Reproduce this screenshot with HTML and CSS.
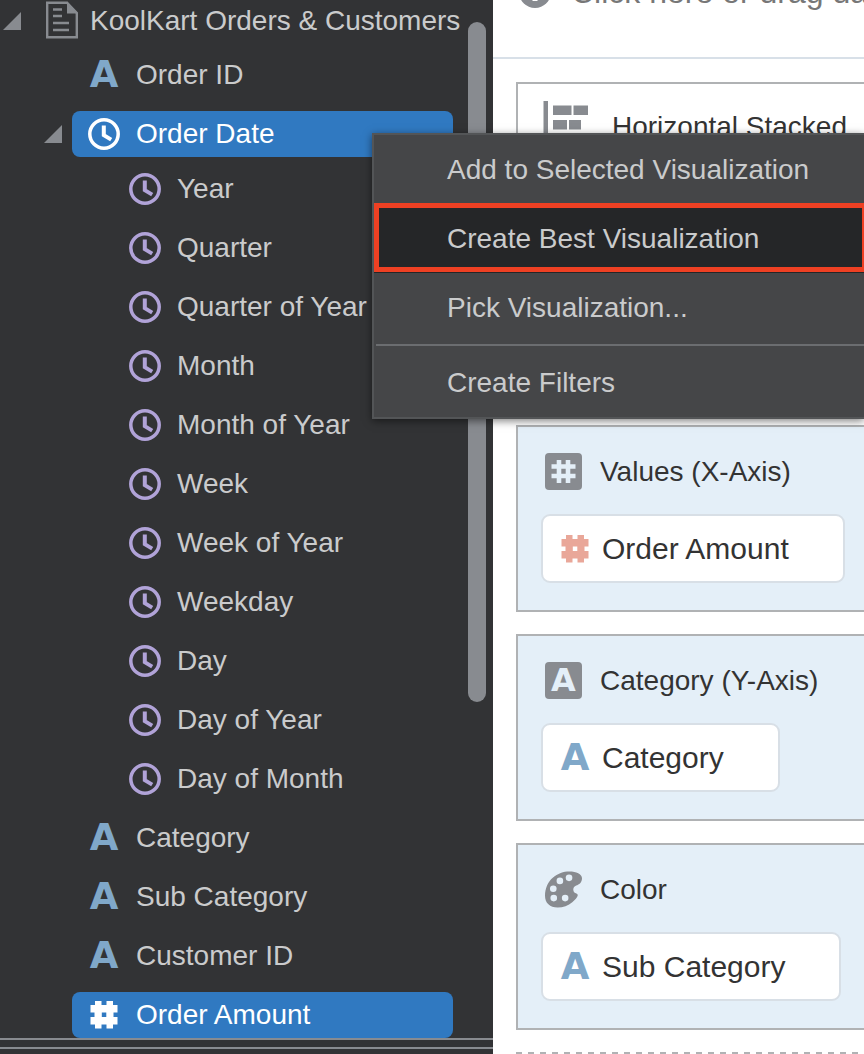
FILE: index.html
```html
<!DOCTYPE html>
<html lang="en">
<head>
<meta charset="utf-8">
<meta name="viewport" content="width=device-width, initial-scale=1">
<title>KoolKart Orders &amp; Customers</title>
<link rel="stylesheet" href="styles.css">
</head>
<body>
<svg class="sprite" aria-hidden="true">
  <symbol id="clock" viewBox="0 0 32 32">
    <circle cx="16" cy="16" r="14.2" fill="none" stroke="currentColor" stroke-width="3.5"/>
    <path d="M15.8 7.6V17.2L23.2 21.6" fill="none" stroke="currentColor" stroke-width="4"/>
  </symbol>
  <symbol id="hash" viewBox="0 0 32 32">
    <path d="M7 2h6.500v4H18.500V2H25v4h4.500v7.500H25.500v4.500h4v7.500H25v4H18.500v-4H13.500v4H7v-4H2.500V18H6.500v-4.500H2.500V6H7zM13.800 13.500v4.500h4.500v-4.500z" fill="currentColor" fill-rule="evenodd"/>
  </symbol>
  <symbol id="toggle" viewBox="0 0 18 18"><path d="M18 0V18H0z" fill="currentColor"/></symbol>
</svg>
<div class="app">
  <aside class="sidebar">
    <div class="scroll-area">
      <ul class="tree">
        <li class="node root">
          <button class="toggle" type="button" aria-label="Collapse data source"><svg><use href="#toggle"/></svg></button>
          <button class="field" type="button">
            <svg class="doc" viewBox="0 0 32 41"><path d="M1.200 1.700H21L30.800 12V36.300H1.200z" fill="none" stroke="currentColor" stroke-width="2.400"/><path d="M21 0.500L32 12.500H21z" fill="currentColor"/><path d="M7 8.500h9M7 15h9M7 22h16M7 29h16" stroke="currentColor" stroke-width="2.400"/></svg>
            <span>KoolKart Orders &amp; Customers</span>
          </button>
        </li>
        <li class="node"><button class="field" type="button"><span class="text-icon" aria-hidden="true">A</span><span>Order ID</span></button></li>
        <li class="node">
          <button class="toggle" type="button" aria-label="Collapse Order Date"><svg><use href="#toggle"/></svg></button>
          <button class="field selected" type="button"><svg class="icon"><use href="#clock"/></svg><span>Order Date</span></button>
        </li>
        <li>
          <ul class="parts">
            <li><button class="field part" type="button"><svg class="icon"><use href="#clock"/></svg><span>Year</span></button></li>
            <li><button class="field part" type="button"><svg class="icon"><use href="#clock"/></svg><span>Quarter</span></button></li>
            <li><button class="field part" type="button"><svg class="icon"><use href="#clock"/></svg><span>Quarter of Year</span></button></li>
            <li><button class="field part" type="button"><svg class="icon"><use href="#clock"/></svg><span>Month</span></button></li>
            <li><button class="field part" type="button"><svg class="icon"><use href="#clock"/></svg><span>Month of Year</span></button></li>
            <li><button class="field part" type="button"><svg class="icon"><use href="#clock"/></svg><span>Week</span></button></li>
            <li><button class="field part" type="button"><svg class="icon"><use href="#clock"/></svg><span>Week of Year</span></button></li>
            <li><button class="field part" type="button"><svg class="icon"><use href="#clock"/></svg><span>Weekday</span></button></li>
            <li><button class="field part" type="button"><svg class="icon"><use href="#clock"/></svg><span>Day</span></button></li>
            <li><button class="field part" type="button"><svg class="icon"><use href="#clock"/></svg><span>Day of Year</span></button></li>
            <li><button class="field part" type="button"><svg class="icon"><use href="#clock"/></svg><span>Day of Month</span></button></li>
          </ul>
        </li>
        <li class="node"><button class="field" type="button"><span class="text-icon" aria-hidden="true">A</span><span>Category</span></button></li>
        <li class="node"><button class="field" type="button"><span class="text-icon" aria-hidden="true">A</span><span>Sub Category</span></button></li>
        <li class="node"><button class="field" type="button"><span class="text-icon" aria-hidden="true">A</span><span>Customer ID</span></button></li>
        <li class="node"><button class="field selected" type="button"><svg class="icon"><use href="#hash"/></svg><span>Order Amount</span></button></li>
      </ul>
      <div class="scrollbar"></div>
    </div>
    <div class="splitter"></div>
  </aside>

  <main class="panel">
    <header class="filter-bar">
      <svg class="plus" viewBox="0 0 32 32"><circle cx="16" cy="16" r="16" fill="currentColor"/><path d="M16 7v18M7 16h18" stroke="#fff" stroke-width="5"/></svg>
      <span>Click here or drag data</span>
    </header>
    <div class="cards">
      <section class="card chart-type">
        <h2 class="card-head">
          <svg class="bars" viewBox="0 0 45 52"><path d="M0.500 0H5V52H0.500zM10 4.500H28.500V14H10zM30.500 4.500H45V14H30.500zM10 19H24V28.500H10zM26 19H38V28.500H26zM10 33H32V43H10z" fill="currentColor"/></svg>
          <span>Horizontal Stacked</span>
        </h2>
      </section>
      <section class="card">
        <h2 class="card-head">
          <svg class="badge" viewBox="0 0 37 37"><rect width="37" height="37" rx="4" fill="currentColor"/><path d="M14 7v23M23 7v23M6.500 13.500h24M6.500 23h24" stroke="#e4eff8" stroke-width="4.600"/></svg>
          <span>Values (X-Axis)</span>
        </h2>
        <button class="chip" type="button"><svg class="icon number"><use href="#hash"/></svg><span>Order Amount</span></button>
      </section>
      <section class="card">
        <h2 class="card-head">
          <span class="badge letter" aria-hidden="true">A</span>
          <span>Category (Y-Axis)</span>
        </h2>
        <button class="chip" type="button"><span class="text-icon" aria-hidden="true">A</span><span>Category</span></button>
      </section>
      <section class="card">
        <h2 class="card-head">
          <svg class="badge" viewBox="0 0 38 37"><path d="M25 0C32 0 38 2.500 38 7C38 11.500 35 13.500 32 14.500C29.500 15.500 28.500 17.500 29.300 20C30 22.500 32 21.500 33.800 24C33.500 27 30.500 29.500 28 31.500C24 35 18.500 37 13 37C5 37 0 32.500 0 25C0 17.500 3 10.500 8 6.500C13 2 19 0 25 0z" fill="currentColor"/><g fill="#e4eff8"><circle cx="24.700" cy="6.500" r="3.400"/><circle cx="15.300" cy="9.700" r="3.400"/><circle cx="8.500" cy="17.700" r="3.400"/><circle cx="9" cy="27.300" r="3.400"/><circle cx="20.700" cy="27.300" r="3.400"/></g></svg>
          <span>Color</span>
        </h2>
        <button class="chip" type="button"><span class="text-icon" aria-hidden="true">A</span><span>Sub Category</span></button>
      </section>
      <div class="drop-zone"></div>
    </div>
  </main>

  <div class="menu" role="menu">
    <button class="menu-item" type="button" role="menuitem">Add to Selected Visualization</button>
    <button class="menu-item active" type="button" role="menuitem">Create Best Visualization</button>
    <button class="menu-item" type="button" role="menuitem">Pick Visualization...</button>
    <hr class="menu-rule">
    <button class="menu-item" type="button" role="menuitem">Create Filters</button>
  </div>
</div>
</body>
</html>
```
FILE: styles.css
```css
* { box-sizing: border-box; }

body {
  margin: 0;
  font: 28px/32px "Liberation Sans", Arial, sans-serif;
  color: #333;
}

button {
  margin: 0;
  padding: 0;
  border: 0;
  background: none;
  color: inherit;
  font: inherit;
  text-align: left;
  white-space: nowrap;
}

ul { margin: 0; padding: 0; list-style: none; }
svg { flex: none; }
.sprite { position: absolute; width: 0; height: 0; }

.app {
  position: relative;
  display: flex;
  height: 100vh;
  overflow: hidden;
}

/* Field tree */
.sidebar {
  flex: 0 0 493px;
  min-width: 0;
  display: flex;
  flex-direction: column;
  background: #323335;
  color: #cacbcc;
}

.scroll-area {
  flex: 1;
  min-width: 0;
  min-height: 0;
  display: flex;
  gap: 15px;
  padding-right: 7px;
}

.tree {
  flex: 1;
  min-width: 0;
  display: flex;
  flex-direction: column;
  gap: 13px;
}

.node {
  display: flex;
  align-items: center;
  padding-left: 72px;
}

.node:has(.toggle) { padding-left: 44px; gap: 10px; }

.node.root:has(.toggle) {
  height: 42px;
  margin-bottom: -3px;
  padding-left: 3px;
  gap: 25px;
}

.toggle { flex: none; width: 18px; height: 18px; color: #888b90; }
.toggle svg { display: block; width: 18px; height: 18px; }

.field {
  display: flex;
  flex: 1;
  align-items: center;
  gap: 16px;
  min-width: 0;
  height: 46px;
  padding-left: 16px;
  border-radius: 8px;
}

.root .field { gap: 12px; padding-left: 0; }
.doc { width: 32px; height: 41px; color: #888b90; }

.selected { background: #3079c1; color: #fff; }

.parts {
  display: flex;
  flex-direction: column;
  gap: 13px;
  margin-top: -4px;
}

.part { padding-left: 129px; }
.part .icon { color: #b1a3d8; }

.icon { width: 32px; height: 32px; }

.text-icon {
  flex: none;
  width: 32px;
  color: #80a8c9;
  font: bold 37px/32px "DejaVu Sans", sans-serif;
  text-align: center;
}

.scrollbar {
  flex: none;
  width: 18px;
  height: 680px;
  margin-top: 22px;
  border-radius: 9px;
  background: #888b90;
}

.splitter {
  flex: none;
  height: 11px;
  margin-bottom: 5px;
  border: solid #888b90;
  border-width: 2px 0;
}

/* Visualization grammar */
.panel {
  flex: 1;
  min-width: 0;
  overflow: hidden;
  background: #fff;
}

.filter-bar {
  display: flex;
  align-items: center;
  gap: 20px;
  height: 132px;
  margin-top: -73px;
  padding-left: 26px;
  border-bottom: 2px solid #d8e0e8;
  color: #777;
  font-size: 32px;
  white-space: nowrap;
}

.plus { width: 32px; height: 32px; color: #888b90; }

.cards {
  display: flex;
  flex-direction: column;
  gap: 22px;
  padding: 23px 0 0 23px;
}

.card {
  display: flex;
  flex-direction: column;
  align-items: flex-start;
  gap: 24px;
  padding: 26px 0 27px 23px;
  border: 2px solid #b0b2b4;
  border-right: 0;
  background: #e4eff8;
}

.card-head {
  display: flex;
  align-items: center;
  gap: 18px;
  margin: 0;
  padding-left: 4px;
  font-size: 28px;
  font-weight: 400;
  white-space: nowrap;
}

.chart-type {
  min-height: 321px;
  padding-top: 17px;
  background: #fff;
}

.chart-type .card-head { gap: 24px; padding-left: 2px; }
.bars { width: 45px; height: 52px; color: #888b90; }
.badge { width: 37px; height: 37px; color: #888b90; }

.letter {
  flex: none;
  border-radius: 4px;
  background: #888b90;
  color: #e4eff8;
  font: bold 32px/37px "DejaVu Sans", sans-serif;
  text-align: center;
}

.chip {
  display: flex;
  align-items: center;
  gap: 11px;
  height: 69px;
  padding: 0 54px 0 16px;
  border: 2px solid #d8dfe6;
  border-radius: 9px;
  background: #fff;
  font-size: 30px;
}

.number { color: #e9a799; }

.drop-zone {
  flex: none;
  height: 187px;
  background: repeating-linear-gradient(90deg, #b0b2b4 0 6px, transparent 6px 12px) top / 100% 2px no-repeat;
}

/* Context menu */
.menu {
  position: absolute;
  top: 133px;
  left: 372px;
  right: 0;
  display: flex;
  flex-direction: column;
  border: 2px solid #535557;
  border-right: 0;
  background: #454648;
  box-shadow: 0 2px 8px rgba(0, 0, 0, 0.5);
  color: #cacbcc;
}

.menu-item { height: 69px; padding-left: 73px; }

.active { position: relative; background: #252628; }

.active::after {
  content: "";
  position: absolute;
  inset: -1px 0 1px 0;
  border: 5px solid #ee4023;
  border-right-width: 2px;
}

.menu-rule {
  width: auto;
  height: 2px;
  margin: 2px 0 2px 2px;
  border: 0;
  background: #6b6d70;
}
```
